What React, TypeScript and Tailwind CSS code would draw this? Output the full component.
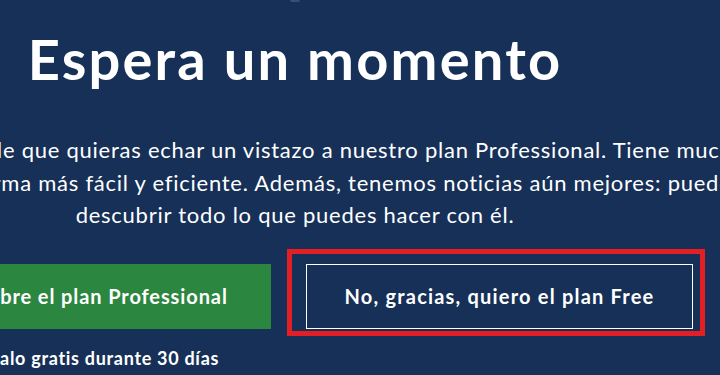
import React from "react";

const font = { fontFamily: "Lato, 'Open Sans', sans-serif" };

export default function App() {
  return (
    <div className="w-[720px] h-[375px] overflow-hidden bg-[#163058] text-white" style={font}>
      {/* page is wider than the window; content centre sits at x=295 */}
      <div className="w-[1200px] ml-[-305px] flex flex-col items-center">
        <div className="h-[2px] w-[10px] rounded-b-full bg-[#3a4f73]" />

        <h1 className="mt-[25px] text-[56px] leading-[64px] font-bold tracking-[2.2px]">
          Espera un momento
        </h1>

        <p className="mt-[43px] text-center text-[22px] leading-[32.5px] tracking-[0.75px]">
          Ante todo, puede que quieras echar un vistazo a nuestro plan Professional. Tiene muchas
          <br />
          para que trabajes de forma más fácil y eficiente. Además, tenemos noticias aún mejores: puedes probarlo
          <br />
          descubrir todo lo que puedes hacer con él.
        </p>

        <div className="mt-[32px] flex items-start gap-[35px]">
          <div className="flex flex-col items-center">
            <button className="w-[374px] h-[65px] bg-[#2b8640] text-[20px] font-bold tracking-[0.9px]">
              Descubre el plan Professional
            </button>
            <span className="mt-[17px] text-[18px] leading-[24px] font-bold tracking-[0.7px]">
              Pruébalo gratis durante 30 días
            </span>
          </div>

          <div className="relative">
            <button className="w-[387px] h-[65px] border border-white text-[20px] font-bold tracking-[1.2px]">
              No, gracias, quiero el plan Free
            </button>
            {/* highlight frame drawn over the button */}
            <div className="pointer-events-none absolute -left-[19px] -top-[15px] -right-[12px] -bottom-[7px] border-[5px] border-[#e31e24]" />
          </div>
        </div>
      </div>
    </div>
  );
}
